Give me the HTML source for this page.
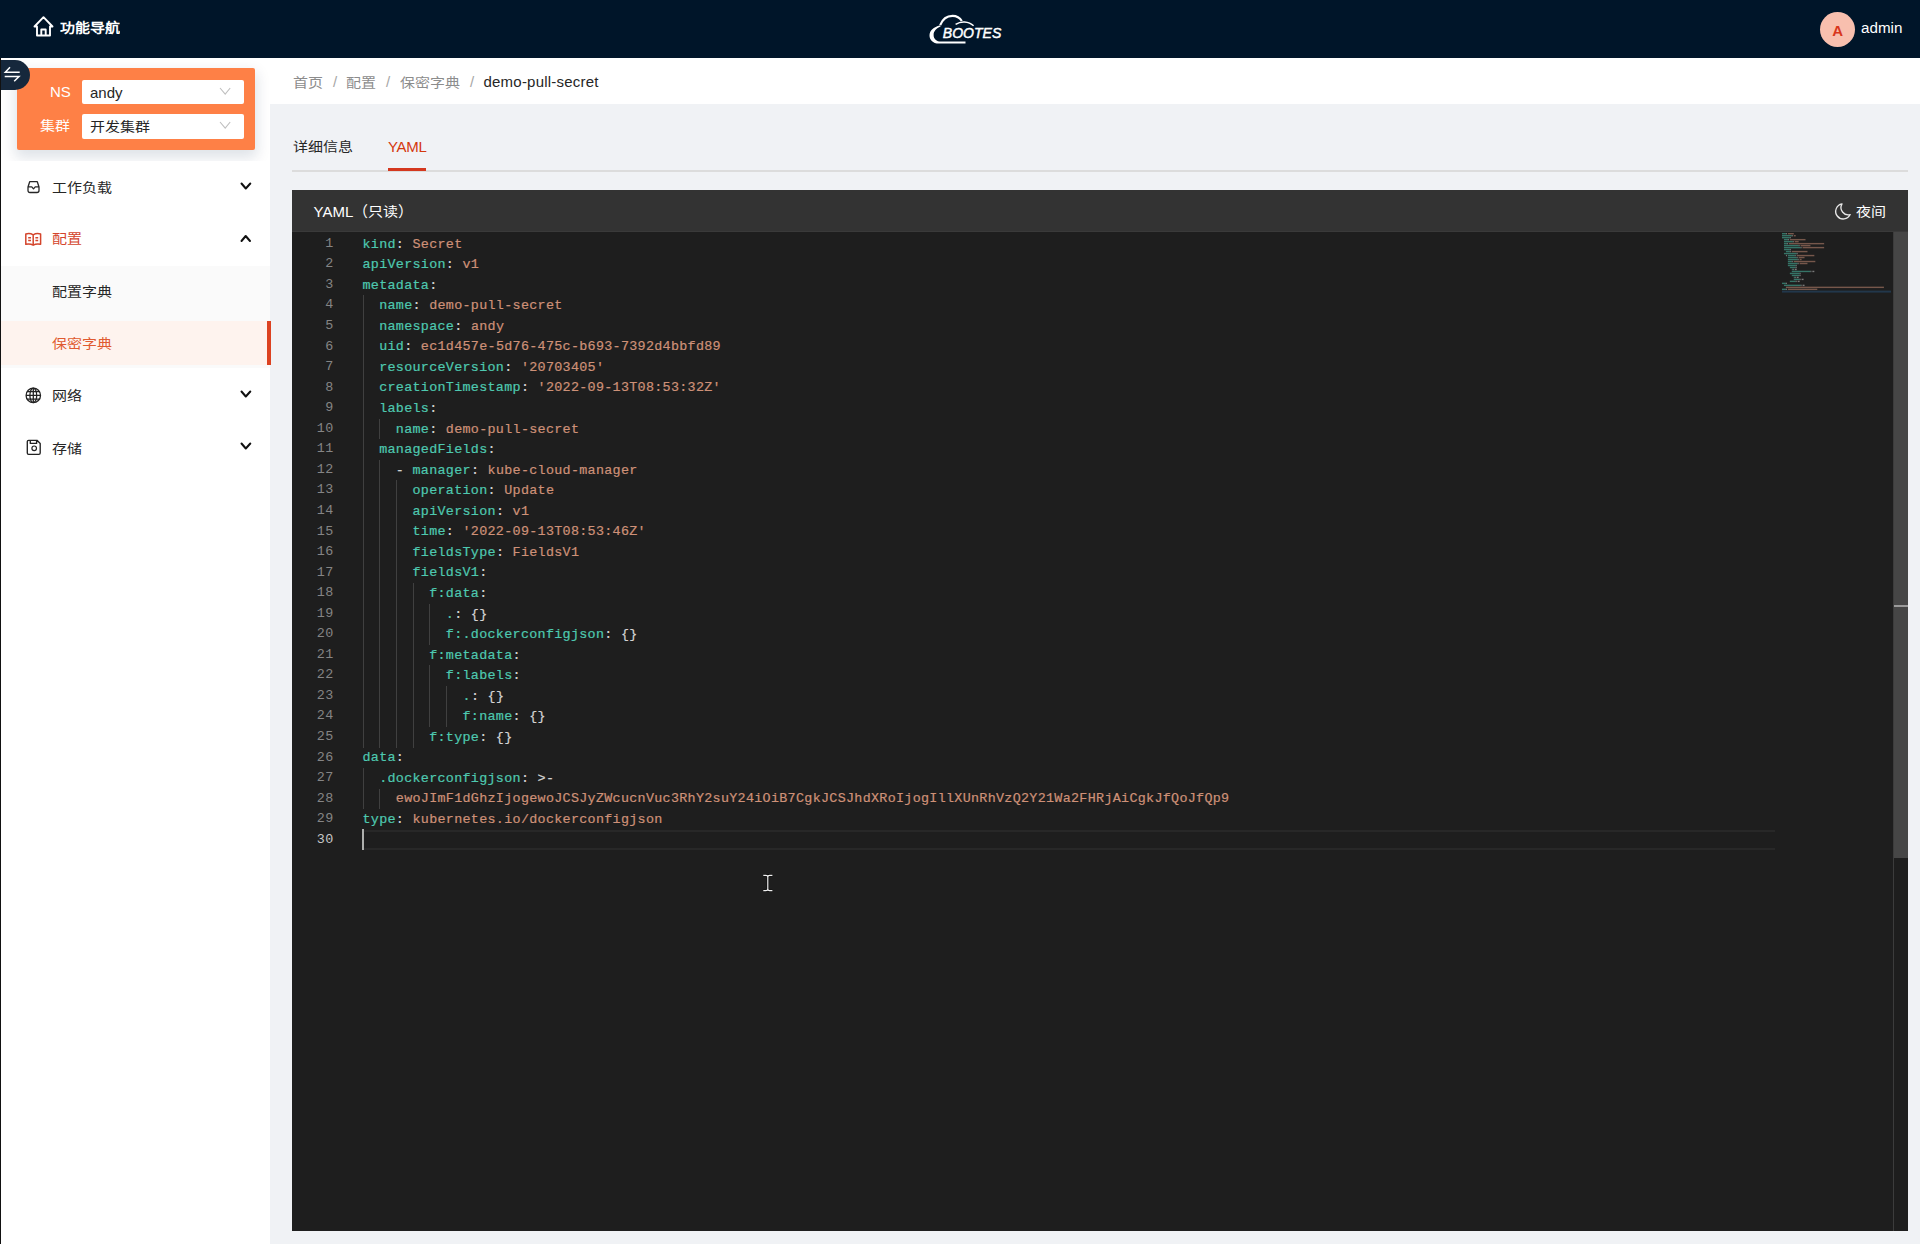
<!DOCTYPE html>
<html lang="zh-CN">
<head>
<meta charset="utf-8">
<style>
*{margin:0;padding:0;box-sizing:border-box}
html,body{width:1920px;height:1244px;overflow:hidden;background:#f0f2f5;font-family:"Liberation Sans",sans-serif;position:relative}
.abs{position:absolute}
.t{position:absolute;white-space:nowrap;line-height:1}
.cj{transform:scaleY(.87);transform-origin:50% 50%}
.cji{display:inline-block;transform:scaleY(.87);transform-origin:50% 50%}
svg{position:absolute;overflow:visible}
.ln{position:absolute;left:292px;width:41.5px;text-align:right;color:#858585;font-family:"Liberation Mono",monospace;font-size:13.4px;letter-spacing:.3px;line-height:20.55px;height:20.55px}
.ln.cur{color:#c6c6c6}
.cl{position:absolute;left:362.5px;color:#d4d4d4;font-family:"Liberation Mono",monospace;font-size:13.4px;letter-spacing:0.300px;-webkit-text-stroke:.2px;line-height:20.55px;height:20.55px;white-space:pre}
.k{color:#4ec9b0}
.v{color:#ce9178}
.g{position:absolute;width:1px;background:#404040}
</style>
</head>
<body>
<!-- header -->
<div class="abs" style="left:0;top:0;width:1920px;height:58px;background:#001529"></div>
<svg style="left:32px;top:14px" width="23" height="23" viewBox="0 0 23 23"><path d="M2.5 12.5 L11.5 3.2 L20.5 12.5 H18 V21.5 H5 V12.5 Z M9.3 21.5 V15.5 H13.7 V21.5" fill="none" stroke="#fff" stroke-width="1.9" stroke-linejoin="round"/></svg>
<div class="t cj" style="left:60px;top:20px;font-size:15px;font-weight:bold;color:#fff">功能导航</div>
<svg style="left:920px;top:8px" width="90" height="40" viewBox="0 0 90 40">
  <path d="M45.5 35.6 L19 35.6 C12.5 35.6 9.5 31.5 9.5 27.5 C9.5 22.8 13.5 19 20.2 17.3 L20.6 18.6 C16.2 20.3 13.6 23.5 13.6 27 C13.6 31 16.6 33.6 21 33.6 L45.5 33.6 Z" fill="#fff"/>
  <path d="M20.2 17.2 C22.5 11 27 7.8 32.5 7.8 C36.5 7.8 39.8 9.6 41.8 13" fill="none" stroke="#fff" stroke-width="2.2"/>
  <path d="M35.6 16.4 C38.5 14.5 41.5 13.8 44.5 14 C48.5 14.3 51.5 15.8 53.6 17.8" fill="none" stroke="#fff" stroke-width="1.5"/>
  <text x="22.8" y="30.0" font-family="Liberation Sans" font-size="14.2" font-style="italic" fill="#fff" stroke="#fff" stroke-width="0.45" textLength="58.5" lengthAdjust="spacingAndGlyphs">BOOTES</text>
</svg>
<div class="abs" style="left:1820px;top:12px;width:35px;height:35px;border-radius:50%;background:#f8bfae"></div>
<div class="t" style="left:1832.3px;top:23px;font-size:15px;font-weight:bold;color:#d8361c">A</div>
<div class="t" style="left:1861px;top:20px;font-size:15.2px;color:#fff">admin</div>

<!-- sidebar -->
<div class="abs" style="left:0;top:58px;width:270px;height:1186px;background:#fff"></div>
<div class="abs" style="left:0;top:58px;width:270px;height:103px;background:#fff;overflow:hidden"><div class="abs" style="left:17px;top:10px;width:238px;height:82px;background:#fe8046;border-radius:2px;box-shadow:0 6px 14px 2px rgba(0,40,80,.13)"></div></div>
<div class="abs" style="left:1px;top:60px;width:29px;height:29.5px;background:#16283c;border-radius:0 15px 15px 0"></div>
<svg style="left:0;top:58px" width="30" height="32"><path d="M10 9.3 L5.3 14.3 H19.7 M4.7 18.6 H19 L14.2 23.3" fill="none" stroke="#fff" stroke-width="1.5"/></svg>
<div class="abs" style="left:0;top:58px;width:1px;height:1186px;background:#111"></div>
<div class="t" style="left:50px;top:84px;font-size:15px;color:#fff">NS</div>
<div class="abs" style="left:82px;top:79.5px;width:161.5px;height:24.5px;background:#fff;border-radius:2px"></div>
<div class="t" style="left:90px;top:85px;font-size:15px;color:#262626">andy</div>
<svg style="left:219px;top:87px" width="12" height="8"><path d="M1 1 L6.2 7.2 L11.2 1" fill="none" stroke="#bfbfbf" stroke-width="1.1"/></svg>
<div class="t cj" style="left:40px;top:118px;font-size:15px;color:#fff">集群</div>
<div class="abs" style="left:82px;top:114px;width:161.5px;height:25px;background:#fff;border-radius:2px"></div>
<div class="t cj" style="left:90px;top:119px;font-size:15px;color:#262626">开发集群</div>
<svg style="left:219px;top:121px" width="12" height="8"><path d="M1 1 L6.2 7.2 L11.2 1" fill="none" stroke="#bfbfbf" stroke-width="1.1"/></svg>

<!-- menu -->
<svg style="left:26px;top:180px" width="16" height="15"><path d="M3.7 1.7 H11.3 L13 7 V10.5 C13 11.8 12.3 12.5 11 12.5 H4 C2.7 12.5 2 11.8 2 10.5 V7 Z M2.2 6.8 H5.8 L7.5 8.8 L9.2 6.8 H12.8" fill="none" stroke="#262626" stroke-width="1.3" stroke-linejoin="round"/></svg>
<div class="t cj" style="left:52px;top:180.2px;font-size:15px;color:#262626">工作负载</div>
<svg style="left:240px;top:182px" width="12" height="9"><path d="M1.5 1.5 L5.8 6.5 L10.3 1.5" fill="none" stroke="#111" stroke-width="2" stroke-linecap="round" stroke-linejoin="round"/></svg>

<svg style="left:24px;top:232px" width="19" height="15"><path d="M1.8 2 C4.5 1.3 7 1.5 9.2 2.8 C11.4 1.5 13.9 1.3 16.6 2 V12.3 C13.9 11.7 11.4 11.9 9.2 13.2 C7 11.9 4.5 11.7 1.8 12.3 Z M9.2 2.8 V13 M4.2 5.8 H7 M4.2 8.5 H7 M11.4 5.8 H14.2 M11.4 8.5 H14.2" fill="none" stroke="#d4452c" stroke-width="1.5" stroke-linejoin="round"/></svg>
<div class="t cj" style="left:52px;top:231px;font-size:15px;color:#d4452c">配置</div>
<svg style="left:240px;top:234px" width="12" height="9"><path d="M1.5 7 L5.7 2 L10 7" fill="none" stroke="#111" stroke-width="2" stroke-linecap="round" stroke-linejoin="round"/></svg>

<div class="abs" style="left:1px;top:265.5px;width:269px;height:102px;background:#fafafa"></div>
<div class="t cj" style="left:52px;top:284px;font-size:15px;color:#262626">配置字典</div>
<div class="abs" style="left:1px;top:321px;width:269px;height:44px;background:#fef3ee"></div>
<div class="abs" style="left:267px;top:321px;width:3.5px;height:44px;background:#dc4221"></div>
<div class="t cj" style="left:52px;top:336.2px;font-size:15px;color:#e05a2f">保密字典</div>

<svg style="left:25px;top:387px" width="17" height="17"><g fill="none" stroke="#222" stroke-width="1.3"><circle cx="8.3" cy="8.4" r="7.2"/><ellipse cx="8.3" cy="8.4" rx="3.4" ry="7.2"/><path d="M1.1 8.4 H15.5 M2.2 4.6 H14.4 M2.2 12.2 H14.4 M8.3 1.2 V15.6"/></g></svg>
<div class="t cj" style="left:52px;top:388.2px;font-size:15px;color:#262626">网络</div>
<svg style="left:240px;top:390px" width="12" height="9"><path d="M1.5 1.5 L5.8 6.5 L10.3 1.5" fill="none" stroke="#111" stroke-width="2" stroke-linecap="round" stroke-linejoin="round"/></svg>

<svg style="left:26px;top:439px" width="16" height="17"><path d="M1.3 2.6 C1.3 1.8 1.8 1.3 2.6 1.3 H11 L14.2 4.5 V14 C14.2 14.8 13.7 15.3 12.9 15.3 H2.6 C1.8 15.3 1.3 14.8 1.3 14 Z M4.3 1.3 V4.4 H10.6 V1.3" fill="none" stroke="#222" stroke-width="1.35" stroke-linejoin="round"/><circle cx="8.2" cy="9.3" r="2.3" fill="none" stroke="#222" stroke-width="1.2"/></svg>
<div class="t cj" style="left:52px;top:440.5px;font-size:15px;color:#262626">存储</div>
<svg style="left:240px;top:442px" width="12" height="9"><path d="M1.5 1.5 L5.8 6.5 L10.3 1.5" fill="none" stroke="#111" stroke-width="2" stroke-linecap="round" stroke-linejoin="round"/></svg>

<!-- breadcrumb -->
<div class="abs" style="left:270px;top:58px;width:1650px;height:45.5px;background:#fff"></div>
<div class="t cj" style="left:292.5px;top:74.5px;font-size:15px;color:#8c8c8c">首页</div>
<div class="t" style="left:333px;top:74px;font-size:15px;color:#a6a6a6">/</div>
<div class="t cj" style="left:346px;top:74.5px;font-size:15px;color:#8c8c8c">配置</div>
<div class="t" style="left:386px;top:74px;font-size:15px;color:#a6a6a6">/</div>
<div class="t cj" style="left:400px;top:74.5px;font-size:15px;color:#8c8c8c">保密字典</div>
<div class="t" style="left:470px;top:74px;font-size:15px;color:#a6a6a6">/</div>
<div class="t" style="left:483.5px;top:74px;font-size:15px;letter-spacing:.22px;color:#262626">demo-pull-secret</div>

<!-- tabs -->
<div class="t cj" style="left:292.5px;top:139px;font-size:15px;color:#262626">详细信息</div>
<div class="t" style="left:388px;top:139px;font-size:15px;letter-spacing:-.3px;color:#d4380d">YAML</div>
<div class="abs" style="left:292px;top:170.4px;width:1616px;height:1.2px;background:#dcdcdc"></div>
<div class="abs" style="left:388px;top:168px;width:38px;height:3px;background:#d4381e"></div>

<!-- editor -->
<div class="abs" style="left:292px;top:190px;width:1616px;height:1041px;background:#1e1e1e"></div>
<div class="abs" style="left:292px;top:190px;width:1616px;height:42.3px;background:#333"></div>
<div class="abs" style="left:292px;top:231.2px;width:1616px;height:1px;background:#3a3a3a"></div>
<div class="t" style="left:313.5px;top:204px;font-size:15px;color:#fff">YAML（<span class="cji">只读</span>）</div>
<svg style="left:1835px;top:203px" width="17" height="17"><path d="M7 0.9 A7.6 7.6 0 1 0 15.2 11.6 A7.3 7.3 0 0 1 7 0.9 Z" fill="none" stroke="#e8e8e8" stroke-width="1.3" stroke-linejoin="round"/></svg>
<div class="t cj" style="left:1856px;top:204px;font-size:15px;color:#fff">夜间</div>
<div class="g" style="left:362.50px;top:295.45px;height:452.10px"></div>
<div class="g" style="left:379.18px;top:418.75px;height:20.55px"></div>
<div class="g" style="left:379.18px;top:459.85px;height:287.70px"></div>
<div class="g" style="left:395.86px;top:480.40px;height:267.15px"></div>
<div class="g" style="left:412.54px;top:583.15px;height:164.40px"></div>
<div class="g" style="left:429.22px;top:603.70px;height:41.10px"></div>
<div class="g" style="left:429.22px;top:665.35px;height:61.65px"></div>
<div class="g" style="left:445.90px;top:685.90px;height:41.10px"></div>
<div class="g" style="left:362.50px;top:768.10px;height:41.10px"></div>
<div class="g" style="left:379.18px;top:788.65px;height:20.55px"></div>
<div class="abs" style="left:362.50px;top:829.75px;width:1412px;height:20.55px;border:2px solid #282828;border-left:none;border-right:none"></div>
<div class="abs" style="left:362.10px;top:828.75px;width:2.3px;height:21.55px;background:#aeafad"></div>
<div class="ln" style="top:233.80px">1</div>
<div class="cl" style="top:234.60px"><span class="k">kind</span>: <span class="v">Secret</span></div>
<div class="ln" style="top:254.35px">2</div>
<div class="cl" style="top:255.15px"><span class="k">apiVersion</span>: <span class="v">v1</span></div>
<div class="ln" style="top:274.90px">3</div>
<div class="cl" style="top:275.70px"><span class="k">metadata</span>:</div>
<div class="ln" style="top:295.45px">4</div>
<div class="cl" style="top:296.25px">  <span class="k">name</span>: <span class="v">demo-pull-secret</span></div>
<div class="ln" style="top:316.00px">5</div>
<div class="cl" style="top:316.80px">  <span class="k">namespace</span>: <span class="v">andy</span></div>
<div class="ln" style="top:336.55px">6</div>
<div class="cl" style="top:337.35px">  <span class="k">uid</span>: <span class="v">ec1d457e-5d76-475c-b693-7392d4bbfd89</span></div>
<div class="ln" style="top:357.10px">7</div>
<div class="cl" style="top:357.90px">  <span class="k">resourceVersion</span>: <span class="v">&#x27;20703405&#x27;</span></div>
<div class="ln" style="top:377.65px">8</div>
<div class="cl" style="top:378.45px">  <span class="k">creationTimestamp</span>: <span class="v">&#x27;2022-09-13T08:53:32Z&#x27;</span></div>
<div class="ln" style="top:398.20px">9</div>
<div class="cl" style="top:399.00px">  <span class="k">labels</span>:</div>
<div class="ln" style="top:418.75px">10</div>
<div class="cl" style="top:419.55px">    <span class="k">name</span>: <span class="v">demo-pull-secret</span></div>
<div class="ln" style="top:439.30px">11</div>
<div class="cl" style="top:440.10px">  <span class="k">managedFields</span>:</div>
<div class="ln" style="top:459.85px">12</div>
<div class="cl" style="top:460.65px">    - <span class="k">manager</span>: <span class="v">kube-cloud-manager</span></div>
<div class="ln" style="top:480.40px">13</div>
<div class="cl" style="top:481.20px">      <span class="k">operation</span>: <span class="v">Update</span></div>
<div class="ln" style="top:500.95px">14</div>
<div class="cl" style="top:501.75px">      <span class="k">apiVersion</span>: <span class="v">v1</span></div>
<div class="ln" style="top:521.50px">15</div>
<div class="cl" style="top:522.30px">      <span class="k">time</span>: <span class="v">&#x27;2022-09-13T08:53:46Z&#x27;</span></div>
<div class="ln" style="top:542.05px">16</div>
<div class="cl" style="top:542.85px">      <span class="k">fieldsType</span>: <span class="v">FieldsV1</span></div>
<div class="ln" style="top:562.60px">17</div>
<div class="cl" style="top:563.40px">      <span class="k">fieldsV1</span>:</div>
<div class="ln" style="top:583.15px">18</div>
<div class="cl" style="top:583.95px">        <span class="k">f:data</span>:</div>
<div class="ln" style="top:603.70px">19</div>
<div class="cl" style="top:604.50px">          <span class="k">.</span>: {}</div>
<div class="ln" style="top:624.25px">20</div>
<div class="cl" style="top:625.05px">          <span class="k">f:.dockerconfigjson</span>: {}</div>
<div class="ln" style="top:644.80px">21</div>
<div class="cl" style="top:645.60px">        <span class="k">f:metadata</span>:</div>
<div class="ln" style="top:665.35px">22</div>
<div class="cl" style="top:666.15px">          <span class="k">f:labels</span>:</div>
<div class="ln" style="top:685.90px">23</div>
<div class="cl" style="top:686.70px">            <span class="k">.</span>: {}</div>
<div class="ln" style="top:706.45px">24</div>
<div class="cl" style="top:707.25px">            <span class="k">f:name</span>: {}</div>
<div class="ln" style="top:727.00px">25</div>
<div class="cl" style="top:727.80px">        <span class="k">f:type</span>: {}</div>
<div class="ln" style="top:747.55px">26</div>
<div class="cl" style="top:748.35px"><span class="k">data</span>:</div>
<div class="ln" style="top:768.10px">27</div>
<div class="cl" style="top:768.90px">  <span class="k">.dockerconfigjson</span>: &gt;-</div>
<div class="ln" style="top:788.65px">28</div>
<div class="cl" style="top:789.45px">    <span class="v">ewoJImF1dGhzIjogewoJCSJyZWcucnVuc3RhY2suY24iOiB7CgkJCSJhdXRoIjogIllXUnRhVzQ2Y21Wa2FHRjAiCgkJfQoJfQp9</span></div>
<div class="ln" style="top:809.20px">29</div>
<div class="cl" style="top:810.00px"><span class="k">type</span>: <span class="v">kubernetes.io/dockerconfigjson</span></div>
<div class="ln cur" style="top:829.75px">30</div>
<div class="cl" style="top:830.55px"></div>
<svg style="left:0;top:0" width="1920" height="1244"><g opacity="0.5"><rect x="1782.00" y="233.00" width="3.92" height="1.4" fill="#4ec9b0"/><rect x="1785.92" y="233.00" width="0.98" height="1.4" fill="#d4d4d4"/><rect x="1787.88" y="233.00" width="5.88" height="1.4" fill="#ce9178"/><rect x="1782.00" y="234.99" width="9.80" height="1.4" fill="#4ec9b0"/><rect x="1791.80" y="234.99" width="0.98" height="1.4" fill="#d4d4d4"/><rect x="1793.76" y="234.99" width="1.96" height="1.4" fill="#ce9178"/><rect x="1782.00" y="236.97" width="7.84" height="1.4" fill="#4ec9b0"/><rect x="1789.84" y="236.97" width="0.98" height="1.4" fill="#d4d4d4"/><rect x="1783.96" y="238.96" width="3.92" height="1.4" fill="#4ec9b0"/><rect x="1787.88" y="238.96" width="0.98" height="1.4" fill="#d4d4d4"/><rect x="1789.84" y="238.96" width="15.68" height="1.4" fill="#ce9178"/><rect x="1783.96" y="240.95" width="8.82" height="1.4" fill="#4ec9b0"/><rect x="1792.78" y="240.95" width="0.98" height="1.4" fill="#d4d4d4"/><rect x="1794.74" y="240.95" width="3.92" height="1.4" fill="#ce9178"/><rect x="1783.96" y="242.94" width="2.94" height="1.4" fill="#4ec9b0"/><rect x="1786.90" y="242.94" width="0.98" height="1.4" fill="#d4d4d4"/><rect x="1788.86" y="242.94" width="35.28" height="1.4" fill="#ce9178"/><rect x="1783.96" y="244.92" width="14.70" height="1.4" fill="#4ec9b0"/><rect x="1798.66" y="244.92" width="0.98" height="1.4" fill="#d4d4d4"/><rect x="1800.62" y="244.92" width="9.80" height="1.4" fill="#ce9178"/><rect x="1783.96" y="246.91" width="16.66" height="1.4" fill="#4ec9b0"/><rect x="1800.62" y="246.91" width="0.98" height="1.4" fill="#d4d4d4"/><rect x="1802.58" y="246.91" width="21.56" height="1.4" fill="#ce9178"/><rect x="1783.96" y="248.90" width="5.88" height="1.4" fill="#4ec9b0"/><rect x="1789.84" y="248.90" width="0.98" height="1.4" fill="#d4d4d4"/><rect x="1785.92" y="250.88" width="3.92" height="1.4" fill="#4ec9b0"/><rect x="1789.84" y="250.88" width="0.98" height="1.4" fill="#d4d4d4"/><rect x="1791.80" y="250.88" width="15.68" height="1.4" fill="#ce9178"/><rect x="1783.96" y="252.87" width="12.74" height="1.4" fill="#4ec9b0"/><rect x="1796.70" y="252.87" width="0.98" height="1.4" fill="#d4d4d4"/><rect x="1785.92" y="254.86" width="0.98" height="1.4" fill="#d4d4d4"/><rect x="1787.88" y="254.86" width="6.86" height="1.4" fill="#4ec9b0"/><rect x="1794.74" y="254.86" width="0.98" height="1.4" fill="#d4d4d4"/><rect x="1796.70" y="254.86" width="17.64" height="1.4" fill="#ce9178"/><rect x="1787.88" y="256.84" width="8.82" height="1.4" fill="#4ec9b0"/><rect x="1796.70" y="256.84" width="0.98" height="1.4" fill="#d4d4d4"/><rect x="1798.66" y="256.84" width="5.88" height="1.4" fill="#ce9178"/><rect x="1787.88" y="258.83" width="9.80" height="1.4" fill="#4ec9b0"/><rect x="1797.68" y="258.83" width="0.98" height="1.4" fill="#d4d4d4"/><rect x="1799.64" y="258.83" width="1.96" height="1.4" fill="#ce9178"/><rect x="1787.88" y="260.82" width="3.92" height="1.4" fill="#4ec9b0"/><rect x="1791.80" y="260.82" width="0.98" height="1.4" fill="#d4d4d4"/><rect x="1793.76" y="260.82" width="21.56" height="1.4" fill="#ce9178"/><rect x="1787.88" y="262.81" width="9.80" height="1.4" fill="#4ec9b0"/><rect x="1797.68" y="262.81" width="0.98" height="1.4" fill="#d4d4d4"/><rect x="1799.64" y="262.81" width="7.84" height="1.4" fill="#ce9178"/><rect x="1787.88" y="264.79" width="7.84" height="1.4" fill="#4ec9b0"/><rect x="1795.72" y="264.79" width="0.98" height="1.4" fill="#d4d4d4"/><rect x="1789.84" y="266.78" width="5.88" height="1.4" fill="#4ec9b0"/><rect x="1795.72" y="266.78" width="0.98" height="1.4" fill="#d4d4d4"/><rect x="1791.80" y="268.77" width="0.98" height="1.4" fill="#4ec9b0"/><rect x="1792.78" y="268.77" width="0.98" height="1.4" fill="#d4d4d4"/><rect x="1794.74" y="268.77" width="1.96" height="1.4" fill="#d4d4d4"/><rect x="1791.80" y="270.75" width="18.62" height="1.4" fill="#4ec9b0"/><rect x="1810.42" y="270.75" width="0.98" height="1.4" fill="#d4d4d4"/><rect x="1812.38" y="270.75" width="1.96" height="1.4" fill="#d4d4d4"/><rect x="1789.84" y="272.74" width="9.80" height="1.4" fill="#4ec9b0"/><rect x="1799.64" y="272.74" width="0.98" height="1.4" fill="#d4d4d4"/><rect x="1791.80" y="274.73" width="7.84" height="1.4" fill="#4ec9b0"/><rect x="1799.64" y="274.73" width="0.98" height="1.4" fill="#d4d4d4"/><rect x="1793.76" y="276.71" width="0.98" height="1.4" fill="#4ec9b0"/><rect x="1794.74" y="276.71" width="0.98" height="1.4" fill="#d4d4d4"/><rect x="1796.70" y="276.71" width="1.96" height="1.4" fill="#d4d4d4"/><rect x="1793.76" y="278.70" width="5.88" height="1.4" fill="#4ec9b0"/><rect x="1799.64" y="278.70" width="0.98" height="1.4" fill="#d4d4d4"/><rect x="1801.60" y="278.70" width="1.96" height="1.4" fill="#d4d4d4"/><rect x="1789.84" y="280.69" width="5.88" height="1.4" fill="#4ec9b0"/><rect x="1795.72" y="280.69" width="0.98" height="1.4" fill="#d4d4d4"/><rect x="1797.68" y="280.69" width="1.96" height="1.4" fill="#d4d4d4"/><rect x="1782.00" y="282.68" width="3.92" height="1.4" fill="#4ec9b0"/><rect x="1785.92" y="282.68" width="0.98" height="1.4" fill="#d4d4d4"/><rect x="1783.96" y="284.66" width="16.66" height="1.4" fill="#4ec9b0"/><rect x="1800.62" y="284.66" width="0.98" height="1.4" fill="#d4d4d4"/><rect x="1802.58" y="284.66" width="1.96" height="1.4" fill="#d4d4d4"/><rect x="1785.92" y="286.65" width="98.00" height="1.4" fill="#ce9178"/><rect x="1782.00" y="288.64" width="3.92" height="1.4" fill="#4ec9b0"/><rect x="1785.92" y="288.64" width="0.98" height="1.4" fill="#d4d4d4"/><rect x="1787.88" y="288.64" width="29.40" height="1.4" fill="#ce9178"/></g><rect x="1782.00" y="290.62" width="109.00" height="1.987" fill="#264f78" opacity="0.5"/></svg>
<!-- scrollbar -->
<div class="abs" style="left:1893px;top:232.3px;width:1px;height:998.7px;background:#3c3c3c"></div>
<div class="abs" style="left:1894px;top:232.3px;width:14px;height:625.5px;background:#464646"></div>
<div class="abs" style="left:1894px;top:605px;width:14px;height:2px;background:#9a9a9a"></div>
<!-- mouse cursor -->
<svg style="left:762px;top:874px" width="12" height="18"><path d="M1.3 1.3 H4 C5 1.3 5.8 2 5.8 3 V15 C5.8 16 5 16.7 4 16.7 H1.3 M10.4 1.3 H7.6 C6.6 1.3 5.8 2 5.8 3 M5.8 15 C5.8 16 6.6 16.7 7.6 16.7 H10.4" fill="none" stroke="#000" stroke-width="2.6" opacity=".6"/><path d="M1.3 1.3 H4 C5 1.3 5.8 2 5.8 3 V15 C5.8 16 5 16.7 4 16.7 H1.3 M10.4 1.3 H7.6 C6.6 1.3 5.8 2 5.8 3 M5.8 15 C5.8 16 6.6 16.7 7.6 16.7 H10.4" fill="none" stroke="#f0f0f0" stroke-width="1.2"/></svg>
</body>
</html>
